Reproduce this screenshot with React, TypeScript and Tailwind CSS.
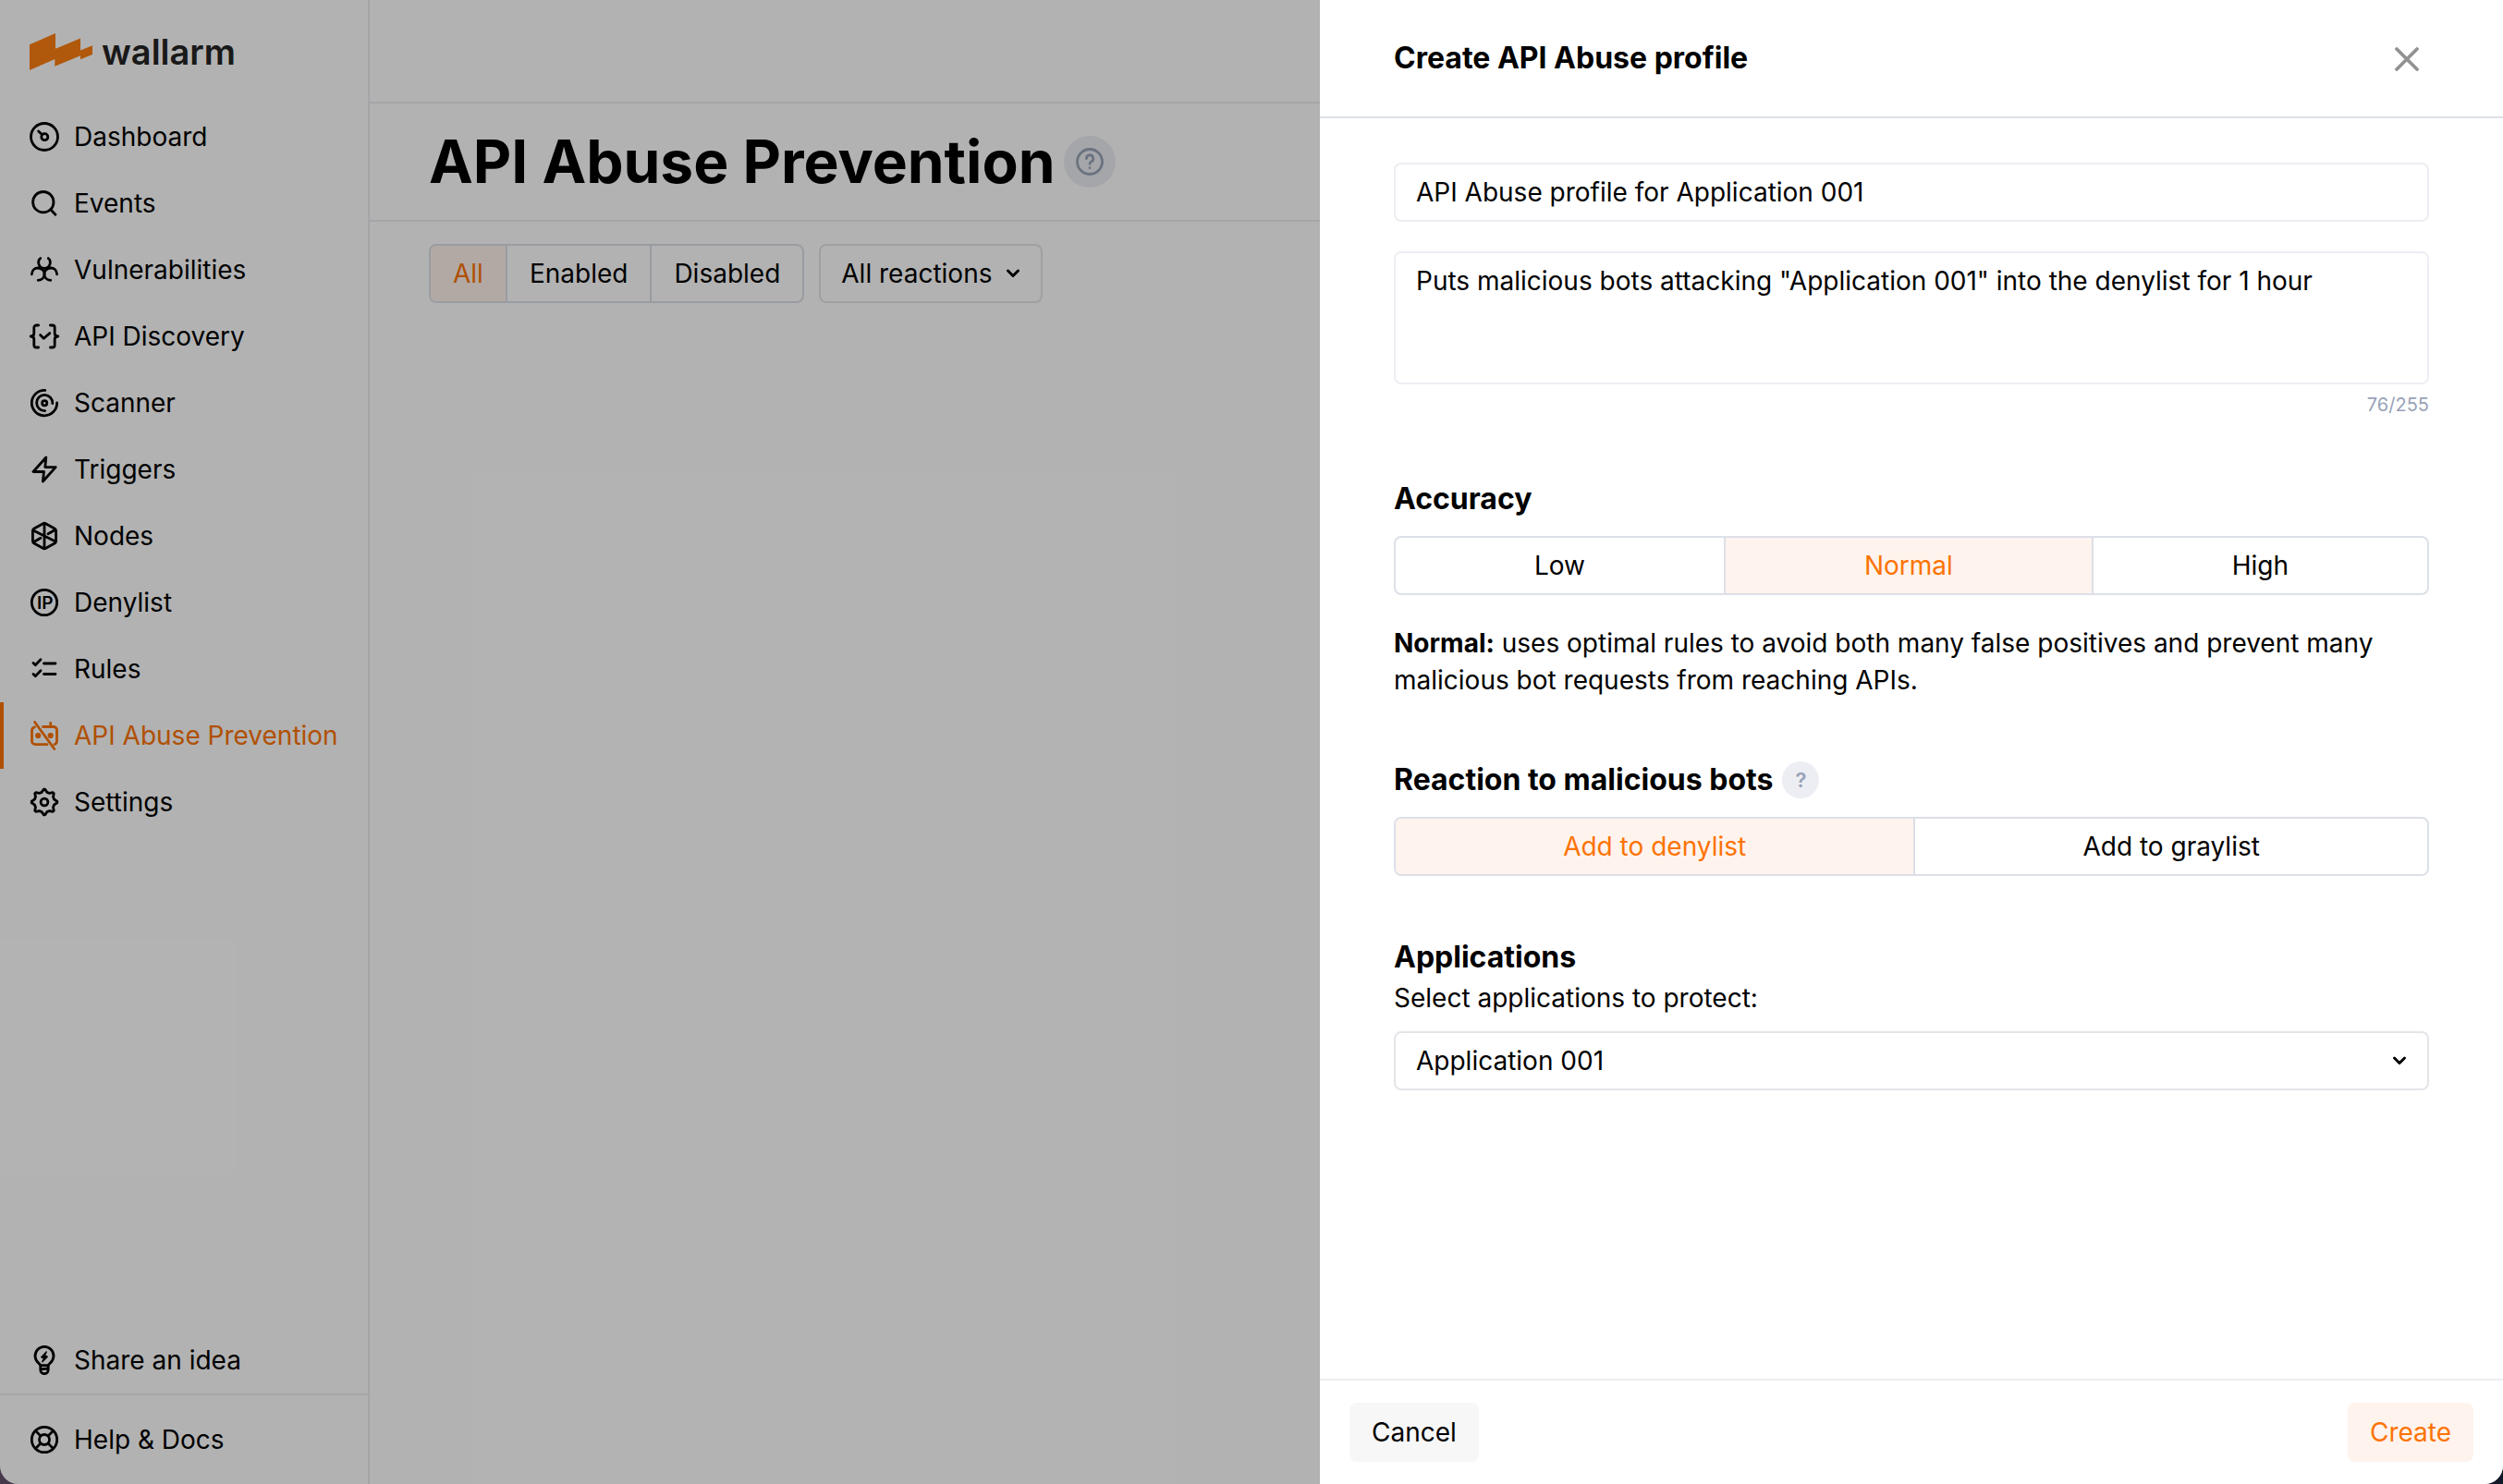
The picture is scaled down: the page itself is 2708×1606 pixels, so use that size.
import type { ReactNode } from "react";

const stroke = {
  fill: "none",
  stroke: "currentColor",
  strokeWidth: 2.8,
  strokeLinecap: "round",
  strokeLinejoin: "round",
} as const;

function Icon({ children }: { children: ReactNode }) {
  return (
    <svg viewBox="0 0 32 32" className="size-8 shrink-0 overflow-visible" aria-hidden="true" {...stroke}>
      {children}
    </svg>
  );
}

const GEAR_PATH =
  Array.from({ length: 8 }, (_, i) => {
    const at = (deg: number, r: number) => {
      const a = ((i * 45 + deg - 90) * Math.PI) / 180;
      return `${(16 + r * Math.cos(a)).toFixed(2)} ${(16 + r * Math.sin(a)).toFixed(2)}`;
    };
    return `${i === 0 ? "M" : "L"}${at(-15, 11)}L${at(-3, 13.8)}L${at(3, 13.8)}L${at(15, 11)}`;
  }).join("") + "Z";

const navItems: { label: string; active?: boolean; icon: ReactNode }[] = [
  {
    label: "Dashboard",
    icon: (
      <>
        <circle cx="16" cy="16" r="14.5" />
        <circle cx="16.3" cy="16.2" r="3.5" />
        <path d="M9.6 10l3.8 3.6" />
      </>
    ),
  },
  {
    label: "Events",
    icon: (
      <>
        <circle cx="14.8" cy="14.7" r="11.2" />
        <path d="M22.8 22.8l5.2 5.4" />
      </>
    ),
  },
  {
    label: "Vulnerabilities",
    icon: (
      <>
        <path d="M11.700 3.600C9.600 5 9.400 7.500 10 9.800c.8 2.800 3.200 4.600 6 4.600s5.200-1.800 6-4.600c.6-2.300.4-4.800-1.700-6.200" />
        <path d="M2.400 20.800C2.600 16.500 5.600 14 9 14c4.300 0 7 3 7 6.300 0 4-2.800 7-6.800 7" />
        <path d="M29.600 20.800c-.2-4.300-3.200-6.800-6.600-6.800-4.300 0-7 3-7 6.300 0 4 2.800 7 6.800 7" />
      </>
    ),
  },
  {
    label: "API Discovery",
    icon: (
      <>
        <path d="M9.600 4H7.400A2.600 2.600 0 0 0 4.800 6.600v6.200c0 2-1.200 3.200-3.600 3.200 2.400 0 3.600 1.200 3.600 3.200v6.200A2.600 2.600 0 0 0 7.400 28h2.200" />
        <path d="M22.400 4h2.200a2.600 2.600 0 0 1 2.600 2.600v6.200c0 2 1.200 3.200 3.600 3.200-2.400 0-3.600 1.200-3.600 3.200v6.200A2.600 2.600 0 0 1 24.600 28h-2.200" />
        <path d="M11.600 14.600l3.700 3.600 6.500-5.600" />
      </>
    ),
  },
  {
    label: "Scanner",
    icon: (
      <>
        <path d="M16.800 2.400A13.700 13.700 0 1 0 29.700 16" />
        <path d="M24.800 16.600A8.600 8.600 0 1 0 16.600 24.600" />
        <circle cx="16.200" cy="16.200" r="2.600" />
      </>
    ),
  },
  { label: "Triggers", icon: <path d="M17.800 3L4 18.500h11.500L14.400 29 28.200 13.600H16.800z" /> },
  {
    label: "Nodes",
    icon: (
      <>
        <path d="M14.500 2.700a3 3 0 0 1 3 0l9.600 5.300a3 3 0 0 1 1.500 2.600v10.800a3 3 0 0 1-1.500 2.600l-9.600 5.300a3 3 0 0 1-3 0L4.900 24a3 3 0 0 1-1.500-2.600V10.600A3 3 0 0 1 4.900 8z" />
        <path d="M16 2.500v27M4 10l24 12M27.500 9.500L20 13.800M4.500 22.500L12 18.200" />
      </>
    ),
  },
  {
    label: "Denylist",
    icon: (
      <>
        <circle cx="16" cy="16" r="13.700" />
        <text
          x="16.800"
          y="23"
          textAnchor="middle"
          fill="currentColor"
          stroke="none"
          className="text-[19px] font-semibold"
        >
          IP
        </text>
      </>
    ),
  },
  {
    label: "Rules",
    icon: (
      <>
        <path d="M15.500 10h12.500M15.500 21.500h12.500" />
        <path d="M4 9.500l2.300 2.200 5.700-5.900M4 21.500l2.300 2.200 5.700-5.900" />
      </>
    ),
  },
  {
    label: "API Abuse Prevention",
    active: true,
    icon: (
      <>
        <path d="M5.500 6.800A4 4 0 0 0 2.500 10.600V22a3.600 3.600 0 0 0 3.600 3.600H19" />
        <path d="M14.500 6.500h11.400a3.600 3.600 0 0 1 3.600 3.600V22a3.600 3.600 0 0 1-2.600 3.500" />
        <path d="M22.700 2.400v4M5.600 1.500l21.200 29" />
        <circle cx="9.200" cy="16" r="1.700" fill="currentColor" />
        <circle cx="22.700" cy="16" r="1.700" fill="currentColor" />
      </>
    ),
  },
  {
    label: "Settings",
    icon: (
      <>
        <path d={GEAR_PATH} />
        <circle cx="16" cy="16" r="3.900" />
      </>
    ),
  },
];

function NavLink({ label, icon, active }: { label: string; icon: ReactNode; active?: boolean }) {
  return (
    <a
      href="#"
      aria-current={active ? "page" : undefined}
      className={
        active
          ? "flex h-18 items-center gap-4 border-l-4 border-[#fc7303] pl-7 text-[#fc7303]"
          : "flex h-18 items-center gap-4 pl-8"
      }
    >
      <Icon>{icon}</Icon>
      {label}
    </a>
  );
}

function Segmented({ label, options, selected }: { label: string; options: string[]; selected: string }) {
  return (
    <div
      role="group"
      aria-label={label}
      className="flex h-16 divide-x-2 divide-[#dce0e7] overflow-hidden rounded-lg border-2 border-[#dce0e7]"
    >
      {options.map((option) => (
        <button
          key={option}
          type="button"
          aria-pressed={option === selected}
          className={option === selected ? "flex-auto bg-[#fff3ed] px-6 text-[#fc7303]" : "flex-auto px-6"}
        >
          {option}
        </button>
      ))}
    </div>
  );
}

function Chevron() {
  return (
    <svg
      viewBox="0 0 16 12"
      className="pointer-events-none absolute top-1/2 right-6 h-3 w-4 -translate-y-1/2"
      aria-hidden="true"
      {...stroke}
      strokeWidth={3}
    >
      <path d="M2.500 3L8 8.500 13.500 3" />
    </svg>
  );
}

function Sidebar() {
  return (
    <aside className="flex w-100 shrink-0 flex-col border-r-2 border-[#edeef3]">
      <a href="#" aria-label="wallarm" className="flex h-28 items-center gap-2.5 pl-8">
        <svg viewBox="0 0 68 40" className="h-10 w-17" aria-hidden="true">
          <path
            fill="#fc7f10"
            d="M0 12.300L28 0v16.800L55 5.400v13L68 13.300v9.700L55 28.300v-4L27.300 35.700v-7.600L0 40z"
          />
        </svg>
        <span className="text-[38px] leading-none font-semibold text-[#242424]">wallarm</span>
      </a>
      <nav className="flex flex-1 flex-col">
        {navItems.map((item) => (
          <NavLink key={item.label} {...item} />
        ))}
        <div className="mt-auto border-b-2 border-[#edeef3]">
          <NavLink
            label="Share an idea"
            icon={
              <>
                <path d="M11.800 21.600c-.5-1-1.300-1.600-2.200-2.600a10 10 0 1 1 12.800 0c-.9 1-1.700 1.600-2.200 2.600z" />
                <path d="M11.800 22v4.500a4.200 4.200 0 0 0 8.400 0V22M12 25.800l8-.8" />
                <path fill="currentColor" strokeWidth="1.400" d="M18.200 7l-5.400 5.800 2.900 1-1.900 4 5.400-5.600-2.800-1.200z" />
              </>
            }
          />
        </div>
        <div className="py-3">
          <NavLink
            label="Help &amp; Docs"
            icon={
              <>
                <circle cx="16" cy="16" r="13.700" />
                <circle cx="16" cy="16" r="5.500" />
                <path d="M6.500 6.500l5.500 5.500M25.500 6.500L20 12M6.500 25.500L12 20M25.500 25.500L20 20" />
              </>
            }
          />
        </div>
      </nav>
    </aside>
  );
}

function ProfilesPage() {
  return (
    <main className="min-w-0 flex-1">
      <div className="h-28 border-b-2 border-[#edeef3]" />
      <header className="flex h-32 items-center gap-2.5 border-b-2 border-[#edeef3] px-16">
        <h1 className="text-[64px] leading-none font-bold">API Abuse Prevention</h1>
        <button
          type="button"
          aria-label="About API Abuse Prevention"
          className="flex size-14 items-center justify-center rounded-full bg-[#edeef3] text-[#99a6b8]"
        >
          <Icon>
            <circle cx="16" cy="16" r="13.500" />
            <path d="M12.400 12.600a3.700 3.700 0 1 1 5.400 3.200c-1.200.7-1.800 1.300-1.800 2.500" />
            <path d="M16 22.600v.1" />
          </Icon>
        </button>
      </header>
      <div className="flex gap-4 px-16 py-6">
        <Segmented label="Profile status" options={["All", "Enabled", "Disabled"]} selected="All" />
        <div className="relative">
          <select
            aria-label="Reaction filter"
            className="h-16 appearance-none rounded-lg border-2 border-[#e4e5e9] bg-transparent pr-13 pl-[22px]"
          >
            <option>All reactions</option>
          </select>
          <Chevron />
        </div>
      </div>
    </main>
  );
}

function ProfileDrawer() {
  return (
    <form
      role="dialog"
      aria-label="Create API Abuse profile"
      className="absolute inset-y-0 right-0 flex w-[1280px] max-w-full flex-col bg-white"
      onSubmit={(event) => event.preventDefault()}
    >
      <header className="flex h-32 items-center justify-between border-b-2 border-[#dce0e7] px-20">
        <h2 className="text-[32px] leading-10 font-bold">Create API Abuse profile</h2>
        <button type="button" aria-label="Close" className="flex size-12 items-center justify-center text-[#929292]">
          <svg viewBox="0 0 28 28" className="size-7" aria-hidden="true" {...stroke} strokeWidth={3.800}>
            <path d="M3 4l22 22M25 4L3 26" />
          </svg>
        </button>
      </header>

      <div className="flex flex-1 flex-col px-20 pt-12">
        <input
          aria-label="Profile name"
          defaultValue="API Abuse profile for Application 001"
          className="h-16 rounded-lg border-2 border-[#edeef3] px-[22px]"
        />
        <textarea
          aria-label="Description"
          defaultValue={'Puts malicious bots attacking "Application 001" into the denylist for 1 hour'}
          className="mt-8 h-36 resize-none rounded-lg border-2 border-[#edeef3] px-[22px] py-2.5 leading-10"
        />
        <p className="mt-2 text-right text-[20px] leading-7 text-[#98a2b8]">76/255</p>

        <section className="mt-16">
          <h3 className="text-[32px] leading-12 font-bold">Accuracy</h3>
          <div className="mt-4">
            <Segmented label="Accuracy" options={["Low", "Normal", "High"]} selected="Normal" />
          </div>
          <p className="mt-8 leading-10">
            <strong className="font-bold">Normal:</strong> uses optimal rules to avoid both many false positives and
            prevent many malicious bot requests from reaching APIs.
          </p>
        </section>

        <section className="mt-16">
          <div className="flex items-center gap-2.5">
            <h3 className="text-[32px] leading-12 font-bold">Reaction to malicious bots</h3>
            <button
              type="button"
              aria-label="About reactions"
              className="flex size-10 items-center justify-center rounded-full bg-[#edeef3] text-[22px] font-semibold text-[#98a2b8]"
            >
              ?
            </button>
          </div>
          <div className="mt-4">
            <Segmented
              label="Reaction to malicious bots"
              options={["Add to denylist", "Add to graylist"]}
              selected="Add to denylist"
            />
          </div>
        </section>

        <section className="mt-16">
          <h3 className="text-[32px] leading-12 font-bold">Applications</h3>
          <label htmlFor="applications" className="block leading-10">
            Select applications to protect:
          </label>
          <div className="relative mt-4">
            <select
              id="applications"
              className="h-16 w-full appearance-none rounded-lg border-2 border-[#e4e5e9] bg-white px-[22px]"
            >
              <option>Application 001</option>
            </select>
            <Chevron />
          </div>
        </section>
      </div>

      <footer className="flex justify-between border-t-2 border-[#edeef0] px-8 py-6">
        <button type="button" className="h-16 rounded-lg bg-[#f7f7f7] px-6">
          Cancel
        </button>
        <button type="submit" className="h-16 rounded-lg bg-[#fff3ed] px-6 text-[#fc7303]">
          Create
        </button>
      </footer>
    </form>
  );
}

export default function App() {
  return (
    <div className="bg-linear-to-r from-[#46394c] to-[#121828]">
      <div className="relative flex min-h-screen overflow-hidden rounded-b-[20px] bg-white font-['Inter',sans-serif] text-[28px] leading-10 text-black">
        <Sidebar />
        <ProfilesPage />
        <div className="absolute inset-0 bg-black/30" />
        <ProfileDrawer />
      </div>
    </div>
  );
}
